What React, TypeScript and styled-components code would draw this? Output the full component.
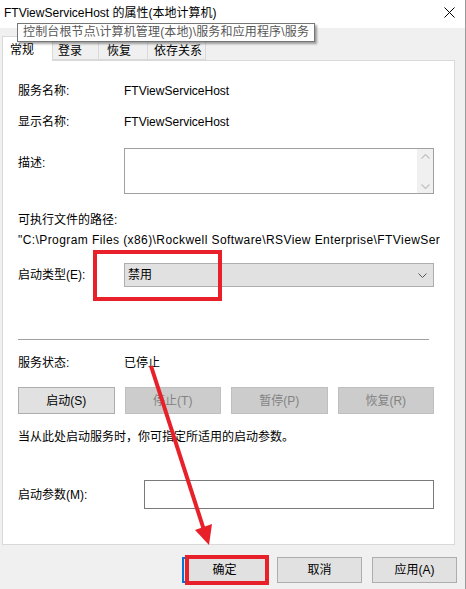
import React from "react";
import styled, { createGlobalStyle } from "styled-components";

const GlobalStyle = createGlobalStyle`
  html, body { margin: 0; padding: 0; background: #f0f0f0; }
  body {
    font-family: "Liberation Sans", "Noto Sans CJK SC", sans-serif;
    font-size: 12px;
    color: #000;
  }
  * { box-sizing: border-box; }
`;

const Window = styled.div`
  position: relative;
  width: 466px;
  height: 589px;
  background: #f0f0f0;
  border-right: 1px solid #9a9a9a;
  overflow: hidden;
  display: flex;
  flex-direction: column;
`;

const TitleBar = styled.div`
  height: 28px;
  background: #fff;
  display: flex;
  align-items: center;
  justify-content: space-between;
  padding: 0 10px 3px 4px;
  flex-shrink: 0;
`;

const Title = styled.span`
  font-size: 12px;
  line-height: 16px;
  color: #000;
`;

const Tooltip = styled.div`
  position: absolute;
  left: 17px;
  top: 23px;
  width: 298px;
  height: 19px;
  background: #fff;
  border: 1px solid #767676;
  box-shadow: 2px 2px 2px rgba(0, 0, 0, 0.35);
  color: #575757;
  line-height: 17px;
  padding-left: 5px;
  white-space: nowrap;
  letter-spacing: 0.15px;
  z-index: 5;
`;

const TabStrip = styled.div`
  display: flex;
  align-items: flex-end;
  height: 24px;
  margin-top: 8px;
  padding-left: 2px;
  position: relative;
  z-index: 1;
`;

const Tab = styled.div<{ $w: number; $active?: boolean; $pl: number }>`
  width: ${(p) => p.$w}px;
  height: ${(p) => (p.$active ? 25 : 21)}px;
  margin-bottom: ${(p) => (p.$active ? -1 : 0)}px;
  padding-left: ${(p) => p.$pl}px;
  padding-top: ${(p) => (p.$active ? 5 : 3)}px;
  line-height: 16px;
  background: ${(p) => (p.$active ? "#fff" : "#f0f0f0")};
  border: 1px solid #d9d9d9;
  border-bottom: ${(p) => (p.$active ? "none" : "1px solid #d9d9d9")};
  border-left-width: ${(p) => (p.$active ? 1 : 0)}px;
`;

const Panel = styled.div`
  margin: 0 10px 0 2px;
  height: 485px;
  background: #fff;
  border: 1px solid #d9d9d9;
  padding: 22px 20px 0 15px;
  display: flex;
  flex-direction: column;
  flex-shrink: 0;
`;

const Row = styled.div<{ $mt: number; $label?: number; $top?: boolean }>`
  display: grid;
  grid-template-columns: ${(p) => p.$label ?? 106}px 1fr;
  align-items: ${(p) => (p.$top ? "start" : "center")};
  margin-top: ${(p) => p.$mt}px;
  line-height: 16px;
`;

const Label = styled.span<{ $pt?: number }>`
  padding-top: ${(p) => p.$pt ?? 0}px;
  white-space: nowrap;
`;

const Line = styled.div<{ $mt: number; $ls?: number }>`
  margin-top: ${(p) => p.$mt}px;
  line-height: 16px;
  white-space: nowrap;
  letter-spacing: ${(p) => p.$ls ?? 0}px;
`;

const DescBox = styled.div`
  height: 46px;
  border: 1px solid #a0a0a0;
  display: flex;
  justify-content: flex-end;
`;

const ScrollBar = styled.div`
  width: 16px;
  height: 100%;
  background: #f0f0f0;
  display: flex;
  flex-direction: column;
  justify-content: space-between;
  align-items: center;
  padding: 5px 0 4px;
`;

const Combo = styled.div`
  height: 24px;
  background: #e1e1e1;
  border: 1px solid #adadad;
  display: flex;
  align-items: center;
  justify-content: space-between;
  padding: 0 6px 0 3px;
`;

const Separator = styled.div`
  margin-top: 52px;
  margin-right: 5px;
  height: 1px;
  background: #a0a0a0;
`;

const ButtonRow = styled.div`
  margin-top: 16px;
  display: grid;
  grid-template-columns: repeat(4, 1fr);
  column-gap: 10px;
`;

const Button = styled.div<{ $disabled?: boolean; $default?: boolean }>`
  height: 27px;
  display: flex;
  align-items: center;
  justify-content: center;
  background: ${(p) => (p.$disabled ? "#cccccc" : "#e1e1e1")};
  border: 1px solid ${(p) => (p.$disabled ? "#bfbfbf" : p.$default ? "#0078d7" : "#adadad")};
  box-shadow: ${(p) => (p.$default ? "inset 0 0 0 1px #0078d7" : "none")};
  color: ${(p) => (p.$disabled ? "#838383" : "#000")};
  line-height: 16px;
`;

const Input = styled.div`
  height: 29px;
  border: 1px solid #7a7a7a;
  background: #fff;
`;

const Footer = styled.div`
  margin-top: 12px;
  padding-right: 8px;
  display: flex;
  justify-content: flex-end;
  gap: 10px;
`;

const FooterButton = styled(Button)`
  width: 85px;
  height: 26px;
`;

const Overlay = styled.svg`
  position: absolute;
  left: 0;
  top: 0;
  width: 466px;
  height: 589px;
  pointer-events: none;
  z-index: 10;
`;

const Chevron = ({ dir, color }: { dir: "up" | "down"; color: string }) => (
  <svg width="9" height="5" viewBox="0 0 9 5">
    <polyline
      points={dir === "up" ? "0.5,4.5 4.5,0.5 8.5,4.5" : "0.5,0.5 4.5,4.5 8.5,0.5"}
      fill="none"
      stroke={color}
      strokeWidth="1.2"
    />
  </svg>
);

export default function App() {
  const red = "#e8202a";
  return (
    <>
      <GlobalStyle />
      <Window>
        <TitleBar>
          <Title>FTViewServiceHost 的属性(本地计算机)</Title>
          <svg width="11" height="11" viewBox="0 0 11 11">
            <path d="M0.5 0.5 L10.5 10.5 M10.5 0.5 L0.5 10.5" stroke="#000" strokeWidth="1" />
          </svg>
        </TitleBar>
        <Tooltip>控制台根节点\计算机管理(本地)\服务和应用程序\服务</Tooltip>
        <TabStrip>
          <Tab $w={51} $pl={7} $active>常规</Tab>
          <Tab $w={46} $pl={5}>登录</Tab>
          <Tab $w={49} $pl={8}>恢复</Tab>
          <Tab $w={58} $pl={6}>依存关系</Tab>
        </TabStrip>
        <Panel>
          <Row $mt={0}>
            <Label>服务名称:</Label>
            <span>FTViewServiceHost</span>
          </Row>
          <Row $mt={15}>
            <Label>显示名称:</Label>
            <span>FTViewServiceHost</span>
          </Row>
          <Row $mt={18} $top>
            <Label $pt={7}>描述:</Label>
            <DescBox>
              <ScrollBar>
                <Chevron dir="up" color="#c2c2c2" />
                <Chevron dir="down" color="#c2c2c2" />
              </ScrollBar>
            </DescBox>
          </Row>
          <Line $mt={18}>可执行文件的路径:</Line>
          <Line $mt={4} $ls={0.42}>
            "C:\Program Files (x86)\Rockwell Software\RSView Enterprise\FTViewSer
          </Line>
          <Row $mt={15}>
            <Label>启动类型(E):</Label>
            <Combo>
              <span>禁用</span>
              <svg width="9" height="5" viewBox="0 0 9 5">
                <polyline points="0.5,0.5 4.5,4.5 8.5,0.5" fill="none" stroke="#555" strokeWidth="1" />
              </svg>
            </Combo>
          </Row>
          <Separator />
          <Row $mt={15}>
            <Label>服务状态:</Label>
            <span>已停止</span>
          </Row>
          <ButtonRow>
            <Button>启动(S)</Button>
            <Button $disabled>停止(T)</Button>
            <Button $disabled>暂停(P)</Button>
            <Button $disabled>恢复(R)</Button>
          </ButtonRow>
          <Line $mt={15}>当从此处启动服务时，你可指定所适用的启动参数。</Line>
          <Row $mt={35} $label={126}>
            <Label>启动参数(M):</Label>
            <Input />
          </Row>
        </Panel>
        <Footer>
          <FooterButton $default>确定</FooterButton>
          <FooterButton>取消</FooterButton>
          <FooterButton>应用(A)</FooterButton>
        </Footer>
        <Overlay viewBox="0 0 466 589">
          <rect x="95" y="252" width="125" height="47" fill="none" stroke={red} strokeWidth="4" />
          <rect x="187" y="557" width="80" height="26" fill="none" stroke={red} strokeWidth="4" />
          <line x1="151" y1="366" x2="204" y2="530" stroke={red} strokeWidth="4" />
          <polygon points="209,545 195,530 212,524" fill={red} />
        </Overlay>
      </Window>
    </>
  );
}
